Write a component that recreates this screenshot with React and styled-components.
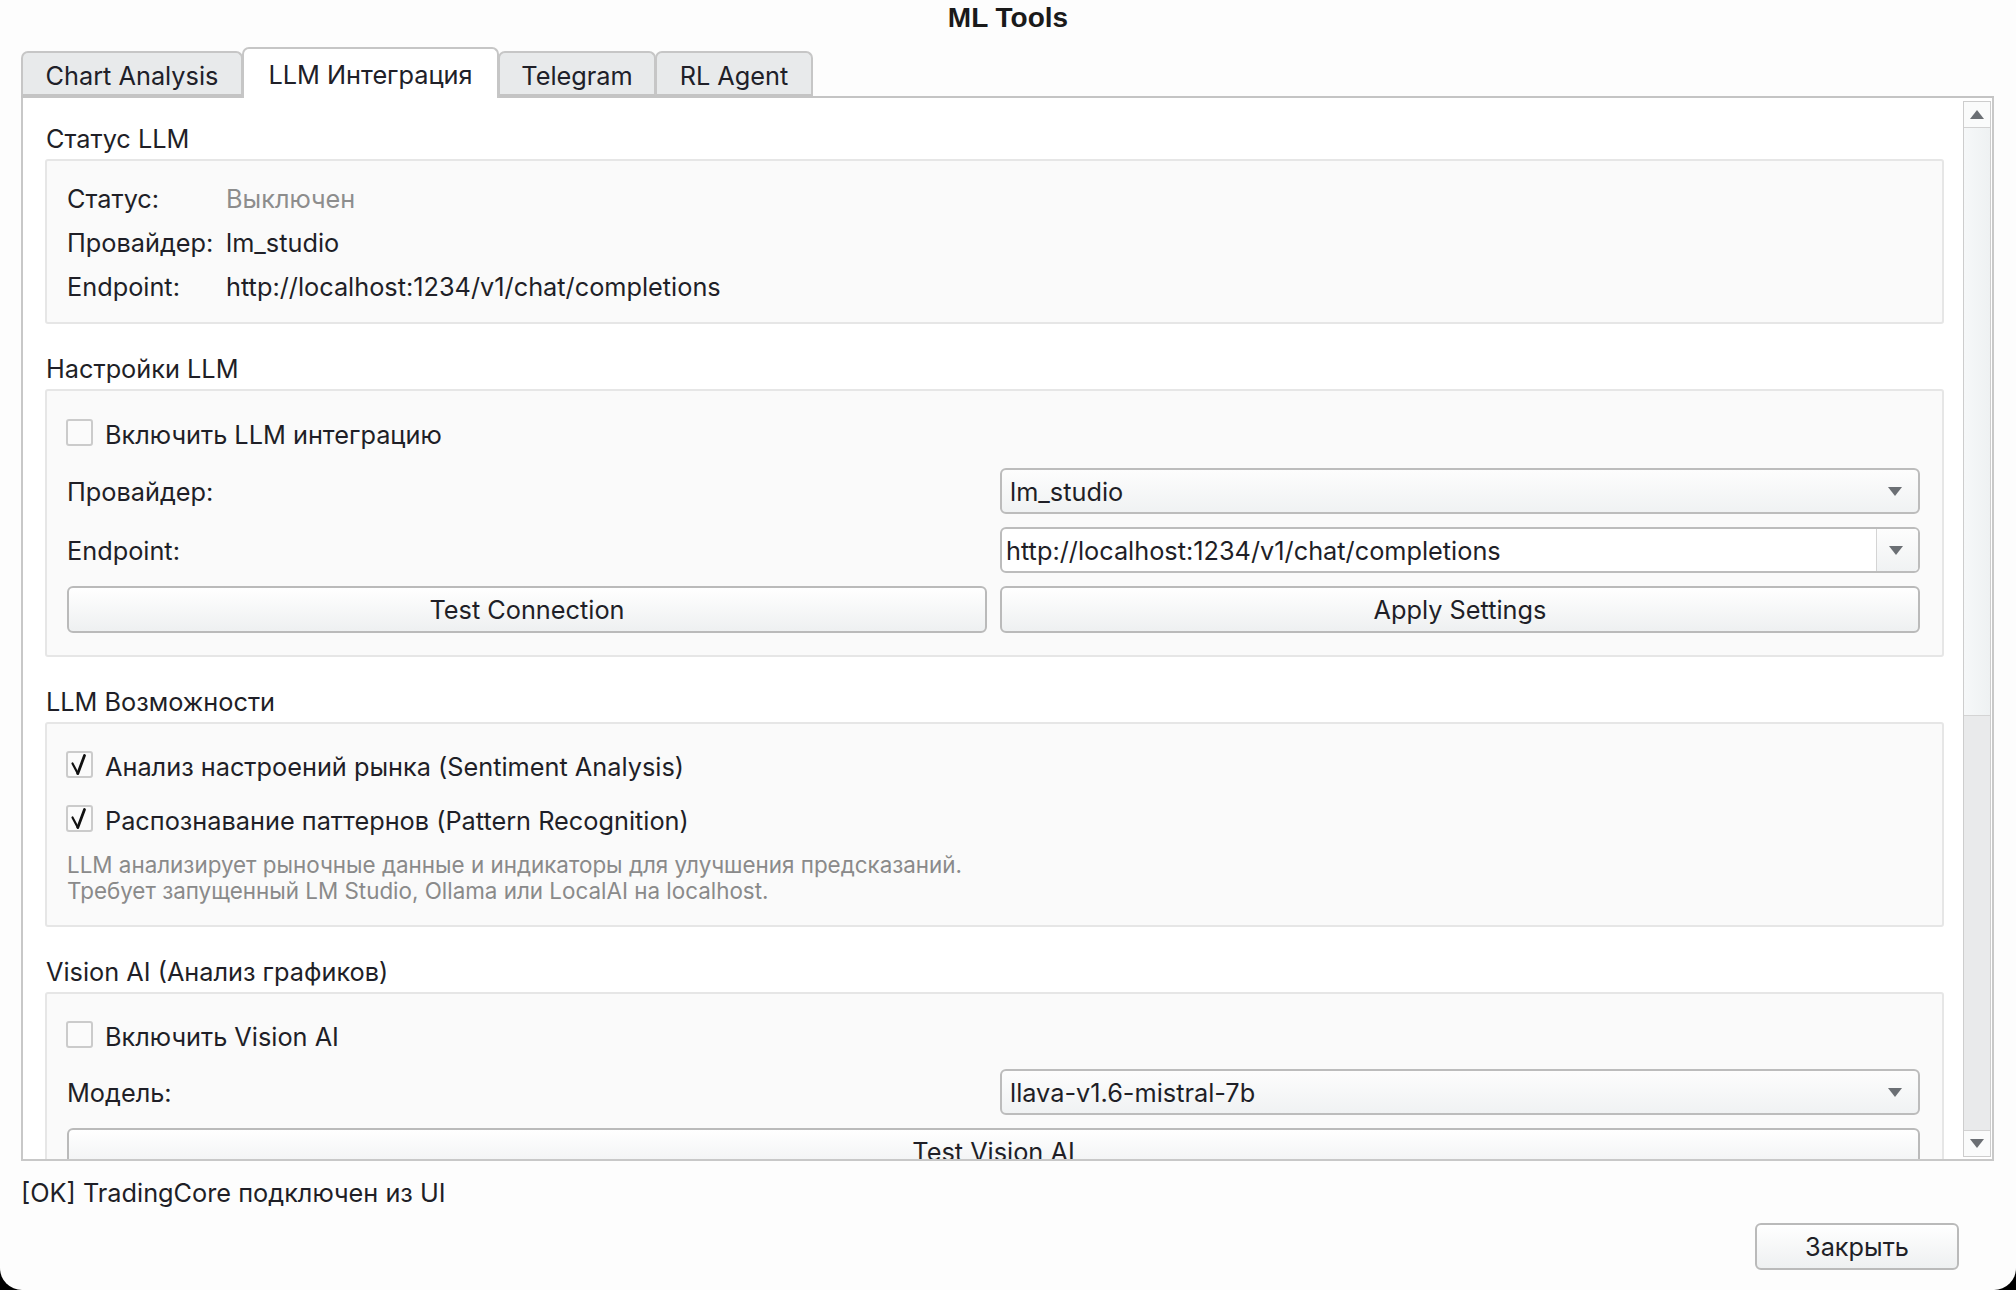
import React from "react";
import styled, { createGlobalStyle } from "styled-components";

const GlobalStyle = createGlobalStyle`
  html, body { margin: 0; padding: 0; background: #000; }
  body { font-family: Inter, "Noto Sans", "Liberation Sans", sans-serif; }
  * { box-sizing: border-box; }
`;

const Window = styled.div`
  width: 2016px;
  height: 1290px;
  background: #fdfdfd;
  border-radius: 0 0 22px 22px;
  display: flex;
  flex-direction: column;
  overflow: hidden;
  color: #1f1f27;
  font-size: 25.3px;
`;

const TitleBar = styled.div`
  height: 36px;
  display: flex;
  align-items: center;
  justify-content: center;
  font-family: "Liberation Sans", Arial, sans-serif;
  font-weight: 700;
  font-size: 28px;
  color: #1a1a1a;
`;

const TabBar = styled.div`
  height: 62px;
  margin: 0 22px 0 21px;
  display: flex;
  align-items: flex-end;
  border-bottom: 2px solid #c4c4c4;
`;

const Tab = styled.div`
  width: ${(p) => p.$w}px;
  height: ${(p) => (p.$active ? 51 : 45)}px;
  margin-bottom: ${(p) => (p.$active ? -2 : 0)}px;
  display: flex;
  align-items: center;
  justify-content: center;
  padding-top: ${(p) => (p.$active ? 1 : 4)}px;
  background: ${(p) => (p.$active ? "#ffffff" : "#e8eaeb")};
  border: 2px solid #c6c6c6;
  border-bottom: ${(p) => (p.$active ? "none" : "2px solid #c4c4c4")};
  border-radius: 7px 7px 0 0;
  color: #202028;
  white-space: nowrap;
  & + & { margin-left: -1px; }
`;

const Pane = styled.div`
  height: 1063px;
  margin: 0 22px 0 21px;
  background: #ffffff;
  border: 2px solid #c8c8c8;
  border-top: none;
  display: flex;
`;

const Content = styled.div`
  flex: 1;
  overflow: hidden;
  padding: 25px 19px 0 22px;
  display: flex;
  flex-direction: column;
`;

const Group = styled.section`
  display: flex;
  flex-direction: column;
  flex-shrink: 0;
  & + & { margin-top: 29px; }
`;

const GroupTitle = styled.div`
  height: 32px;
  line-height: 32px;
  padding-left: 1px;
  margin-bottom: 4px;
`;

const GroupBox = styled.div`
  background: #fafafa;
  border: 2px solid #e6e6e6;
  border-radius: 3px;
  padding: ${(p) => p.$pad};
  display: flex;
  flex-direction: column;
`;

const InfoGrid = styled.div`
  display: grid;
  grid-template-columns: 159px 1fr;
  row-gap: 12px;
  line-height: 32px;
`;

const Value = styled.span`
  color: ${(p) => (p.$muted ? "#8d8d8d" : "#1f1f27")};
`;

const FormGrid = styled.div`
  display: grid;
  grid-template-columns: 1fr 1fr;
  column-gap: 13px;
  row-gap: 13px;
  margin-top: ${(p) => p.$mt || 0}px;
`;

const FieldLabel = styled.div`
  display: flex;
  align-items: center;
  height: 46px;
`;

const CheckRow = styled.label`
  display: flex;
  align-items: center;
  gap: 12px;
  height: 32px;
  margin-top: ${(p) => p.$mt || 0}px;
`;

const Box = styled.span`
  width: 27px;
  height: 27px;
  margin-left: -1px;
  border: 2px solid #cbcbcb;
  border-radius: 3px;
  background: #fbfbfb;
  display: flex;
  align-items: center;
  justify-content: center;
  margin-top: -3px;
`;

const Combo = styled.div`
  height: 46px;
  border: 2px solid #bcbcbc;
  border-radius: 6px;
  background: ${(p) => (p.$editable ? "#ffffff" : "linear-gradient(#fdfdfd, #f0f2f3)")};
  display: flex;
  align-items: center;
  overflow: hidden;
`;

const ComboText = styled.div`
  flex: 1;
  padding-left: ${(p) => (p.$editable ? 4 : 8)}px;
  white-space: nowrap;
`;

const ComboArrow = styled.div`
  width: 42px;
  height: 100%;
  display: flex;
  align-items: center;
  justify-content: center;
  padding-right: 4px;
  border-left: ${(p) => (p.$editable ? "1px solid #d4d4d4" : "none")};
  background: ${(p) => (p.$editable ? "linear-gradient(#fdfdfd, #f0f2f3)" : "transparent")};
`;

const Button = styled.button`
  height: 47px;
  width: ${(p) => (p.$w ? `${p.$w}px` : "100%")};
  border: 2px solid #bababa;
  border-radius: 6px;
  background: linear-gradient(#ffffff, #eef0f1);
  font-family: inherit;
  font-size: 25.3px;
  color: #1f1f27;
  padding: 0;
  flex-shrink: 0;
`;

const SpanButton = styled(Button)`
  grid-column: 1 / span 2;
`;

const Desc = styled.div`
  margin-top: 16px;
  font-size: 22.4px;
  line-height: 26px;
  color: #8a8a8a;
`;

const Scrollbar = styled.div`
  width: 29px;
  padding: 3px 1px 2px 0;
  display: flex;
  flex-direction: column;
`;

const ScrollInner = styled.div`
  flex: 1;
  border: 1px solid #cdcdcd;
  display: flex;
  flex-direction: column;
  background: #e9eaeb;
`;

const ScrollBtn = styled.div`
  height: 26px;
  display: flex;
  align-items: center;
  justify-content: center;
  background: #fafbfb;
  border-${(p) => (p.$down ? "top" : "bottom")}: 1px solid #d2d2d2;
`;

const Thumb = styled.div`
  height: 588px;
  background: linear-gradient(90deg, #f6f8f9, #eef1f2);
  border-bottom: 1px solid #d4d4d4;
`;

const Track = styled.div`
  flex: 1;
`;

const StatusLine = styled.div`
  margin: 16px 0 0 21px;
  height: 32px;
  line-height: 32px;
`;

const Footer = styled.div`
  display: flex;
  justify-content: flex-end;
  margin: 14px 57px 0 0;
`;

const Arrow = ({ up }) => (
  <svg width="14" height="9" viewBox="0 0 14 9">
    <path d={up ? "M0 9 L7 0 L14 9 Z" : "M0 0 L14 0 L7 9 Z"} fill="#6b6f74" />
  </svg>
);

const Check = () => (
  <svg width="23" height="23" viewBox="0 0 23 23">
    <path d="M4.5 10.5 L9.8 20.5" stroke="#111" strokeWidth="2.2" fill="none" strokeLinecap="round" />
    <path d="M9.8 20.5 L16.5 2.5" stroke="#111" strokeWidth="2.8" fill="none" strokeLinecap="round" />
  </svg>
);

const CheckBox = ({ checked, children, mt }) => (
  <CheckRow $mt={mt}>
    <Box>{checked && <Check />}</Box>
    <span>{children}</span>
  </CheckRow>
);

const ComboBox = ({ value, editable }) => (
  <Combo $editable={editable}>
    <ComboText $editable={editable}>{value}</ComboText>
    <ComboArrow $editable={editable}>
      <Arrow />
    </ComboArrow>
  </Combo>
);

export default function App() {
  return (
    <>
      <GlobalStyle />
      <Window>
        <TitleBar>ML Tools</TitleBar>
        <TabBar>
          <Tab $w={222}>Chart Analysis</Tab>
          <Tab $w={257} $active>LLM Интеграция</Tab>
          <Tab $w={158}>Telegram</Tab>
          <Tab $w={158}>RL Agent</Tab>
        </TabBar>
        <Pane>
          <Content>
            <Group>
              <GroupTitle>Статус LLM</GroupTitle>
              <GroupBox $pad="22px 20px 19px 20px">
                <InfoGrid>
                  <span>Статус:</span>
                  <Value $muted>Выключен</Value>
                  <span>Провайдер:</span>
                  <Value>lm_studio</Value>
                  <span>Endpoint:</span>
                  <Value>http://localhost:1234/v1/chat/completions</Value>
                </InfoGrid>
              </GroupBox>
            </Group>

            <Group>
              <GroupTitle>Настройки LLM</GroupTitle>
              <GroupBox $pad="27px 22px 22px 20px">
                <CheckBox>Включить LLM интеграцию</CheckBox>
                <FormGrid $mt={18}>
                  <FieldLabel>Провайдер:</FieldLabel>
                  <ComboBox value="lm_studio" />
                  <FieldLabel>Endpoint:</FieldLabel>
                  <ComboBox value="http://localhost:1234/v1/chat/completions" editable />
                  <Button>Test Connection</Button>
                  <Button>Apply Settings</Button>
                </FormGrid>
              </GroupBox>
            </Group>

            <Group>
              <GroupTitle>LLM Возможности</GroupTitle>
              <GroupBox $pad="26px 22px 21px 20px">
                <CheckBox checked>Анализ настроений рынка (Sentiment Analysis)</CheckBox>
                <CheckBox checked mt={22}>Распознавание паттернов (Pattern Recognition)</CheckBox>
                <Desc>
                  LLM анализирует рыночные данные и индикаторы для улучшения предсказаний.
                  <br />
                  Требует запущенный LM Studio, Ollama или LocalAI на localhost.
                </Desc>
              </GroupBox>
            </Group>

            <Group>
              <GroupTitle>Vision AI (Анализ графиков)</GroupTitle>
              <GroupBox $pad="26px 22px 22px 20px">
                <CheckBox>Включить Vision AI</CheckBox>
                <FormGrid $mt={17}>
                  <FieldLabel>Модель:</FieldLabel>
                  <ComboBox value="llava-v1.6-mistral-7b" />
                  <SpanButton>Test Vision AI</SpanButton>
                </FormGrid>
              </GroupBox>
            </Group>
          </Content>
          <Scrollbar>
            <ScrollInner>
              <ScrollBtn>
                <Arrow up />
              </ScrollBtn>
              <Thumb />
              <Track />
              <ScrollBtn $down>
                <Arrow />
              </ScrollBtn>
            </ScrollInner>
          </Scrollbar>
        </Pane>
        <StatusLine>[OK] TradingCore подключен из UI</StatusLine>
        <Footer>
          <Button $w={204}>Закрыть</Button>
        </Footer>
      </Window>
    </>
  );
}
